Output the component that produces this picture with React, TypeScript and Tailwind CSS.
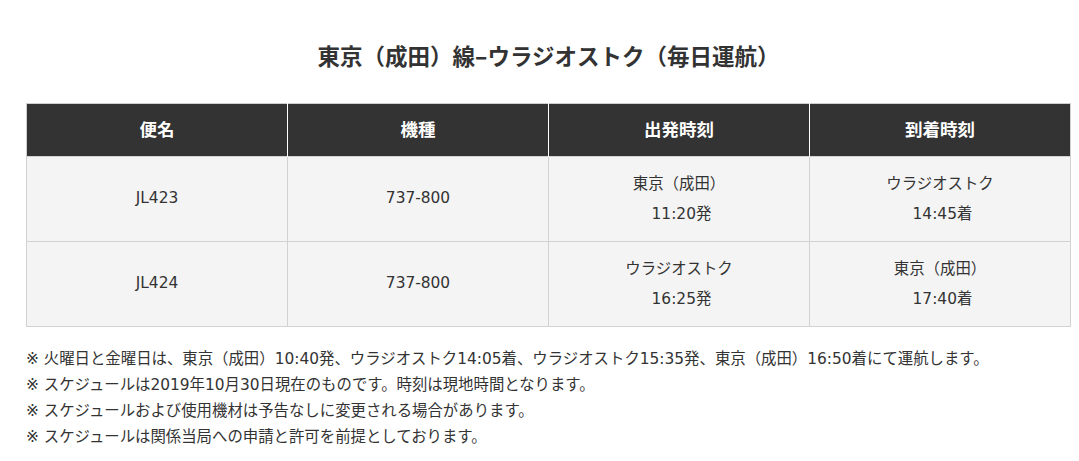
import React from "react";

const font = { fontFamily: '"DejaVu Sans", "Noto Sans CJK JP", sans-serif' };

const rows = [
  { no: "JL423", type: "737-800", dep: ["東京（成田）", "11:20発"], arr: ["ウラジオストク", "14:45着"] },
  { no: "JL424", type: "737-800", dep: ["ウラジオストク", "16:25発"], arr: ["東京（成田）", "17:40着"] },
];

const notes = [
  "※ 火曜日と金曜日は、東京（成田）10:40発、ウラジオストク14:05着、ウラジオストク15:35発、東京（成田）16:50着にて運航します。",
  "※ スケジュールは2019年10月30日現在のものです。時刻は現地時間となります。",
  "※ スケジュールおよび使用機材は予告なしに変更される場合があります。",
  "※ スケジュールは関係当局への申請と許可を前提としております。",
];

export default function App() {
  return (
    <div className="w-[1079px] h-[461px] bg-white text-[#333]" style={font}>
      <div className="ml-[26px] w-[1045px] pt-[39px]">
        <h2 className="text-center text-[22.5px] leading-[32px] font-bold text-[#333]">
          東京（成田）線<span className="font-['Noto_Sans_CJK_JP',sans-serif] font-black">–</span>ウラジオストク（毎日運航）
        </h2>
        <table className="mt-[30px] w-full table-fixed border-collapse border border-[#cfcfcf] text-[15.4px]">
          <thead>
            <tr className="h-[53px] bg-[#333] text-white">
              {["便名", "機種", "出発時刻", "到着時刻"].map((h) => (
                <th key={h} className="border-x border-white p-0 text-[17.5px] leading-[18px] font-bold first:border-l-[#cfcfcf] last:border-r-[#cfcfcf]">
                  {h}
                </th>
              ))}
            </tr>
          </thead>
          <tbody>
            {rows.map((r) => (
              <tr key={r.no} className="h-[85px] bg-[#f4f4f4]">
                <td className="border border-[#d2d2d2] text-center">{r.no}</td>
                <td className="border border-[#d2d2d2] text-center">{r.type}</td>
                <td className="border border-[#d2d2d2] text-center leading-[30px]">
                  {r.dep[0]}
                  <br />
                  &nbsp;{r.dep[1]}
                </td>
                <td className="border border-[#d2d2d2] text-center leading-[30px]">
                  {r.arr[0]}
                  <br />
                  &nbsp;{r.arr[1]}
                </td>
              </tr>
            ))}
          </tbody>
        </table>
        <div className="mt-[19px] text-[15.4px] leading-[26px]">
          {notes.map((n) => (
            <p key={n}>{n}</p>
          ))}
        </div>
      </div>
    </div>
  );
}
